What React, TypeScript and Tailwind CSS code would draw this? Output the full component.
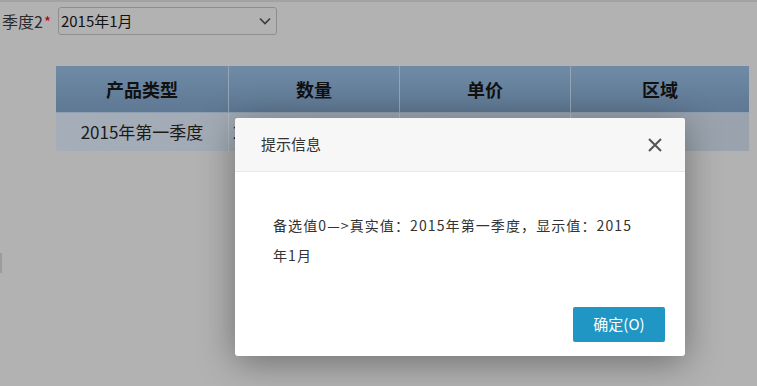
import React from "react";

const cjk = { fontFamily: '"Microsoft YaHei", "Noto Sans CJK SC", "Noto Sans", sans-serif' };

export default function App() {
  return (
    <div className="relative w-[757px] h-[386px] overflow-hidden bg-[#b2b2b2]" style={cjk}>
      <div className="h-[2px] bg-[#a2a2a2]" />
      <div className="flex items-center h-[28px] mt-[5px] pl-[2px]">
        <span className="text-[16px] text-[#2b2b2b] leading-none">季度2</span>
        <span className="text-[15px] text-[#b3001a] leading-none ml-[1px]">*</span>
        <div className="ml-[7px] w-[219px] h-[28px] border border-[#8e8e8e] rounded-[3px] flex items-center justify-between pl-[2px] pr-[4px]">
          <span className="text-[15px] text-[#111]">2015年1月</span>
          <svg width="14" height="14" viewBox="0 0 14 14" fill="none" stroke="#3a3a3a" strokeWidth="1.6">
            <path d="M2 4.5 L7 9.5 L12 4.5" />
          </svg>
        </div>
      </div>
      <div className="ml-[56px] mt-[31px] w-[693px]">
        <div className="flex h-[47px] bg-gradient-to-b from-[#6f8ba6] to-[#5f7893] border-b border-[#8fa0b2]">
          {[
            ["产品类型", "w-[173px]"],
            ["数量", "w-[171px]"],
            ["单价", "w-[171px]"],
            ["区域", "flex-1"],
          ].map(([t, w], i) => (
            <div
              key={i}
              className={`${w} flex items-center justify-center text-[18px] font-bold text-[#111] ${i < 3 ? "border-r border-[#94a5b7]" : ""}`}
            >
              {t}
            </div>
          ))}
        </div>
        <div className="flex h-[38px] bg-gradient-to-r from-[#a5aeb8] to-[#9aa3ad]">
          <div className="w-[173px] flex items-center justify-center text-[17px] text-[#1a1a1a] border-r border-[#b3bbc4]">
            2015年第一季度
          </div>
          <div className="w-[171px] flex items-center pl-[4px] text-[17px] text-[#1a1a1a] border-r border-[#b3bbc4]">
            2015年1月
          </div>
          <div className="w-[171px] border-r border-[#b3bbc4]" />
          <div className="flex-1" />
        </div>
      </div>
      <div className="absolute left-0 top-[253px] w-[2px] h-[20px] bg-[#9c9c9c]" />

      <div className="absolute left-[235px] top-[118px] w-[450px] h-[238px] bg-white rounded-[3px] shadow-[0_6px_36px_rgba(0,0,0,0.38)] flex flex-col">
        <div className="h-[54px] bg-[#f7f7f7] border-b border-[#e8e8e8] rounded-t-[3px] flex items-center justify-between pl-[26px] pr-[22px]">
          <span className="text-[15px] text-[#333]">提示信息</span>
          <svg width="16" height="16" viewBox="0 0 16 16" stroke="#555" strokeWidth="2" fill="none">
            <path d="M2 2 L14 14 M14 2 L2 14" />
          </svg>
        </div>
        <div className="pl-[38px] pr-[42px] pt-[38px] text-[14px] leading-[30px] tracking-[1.1px] text-[#333]">
          备选值0—&gt;真实值：2015年第一季度，显示值：2015年1月
        </div>
        <div className="mt-auto mb-[14px] flex justify-end pr-[20px]">
          <button className="w-[92px] h-[35px] bg-[#1f96c3] text-white text-[15px] rounded-[2px]">
            确定(O)
          </button>
        </div>
      </div>
    </div>
  );
}
